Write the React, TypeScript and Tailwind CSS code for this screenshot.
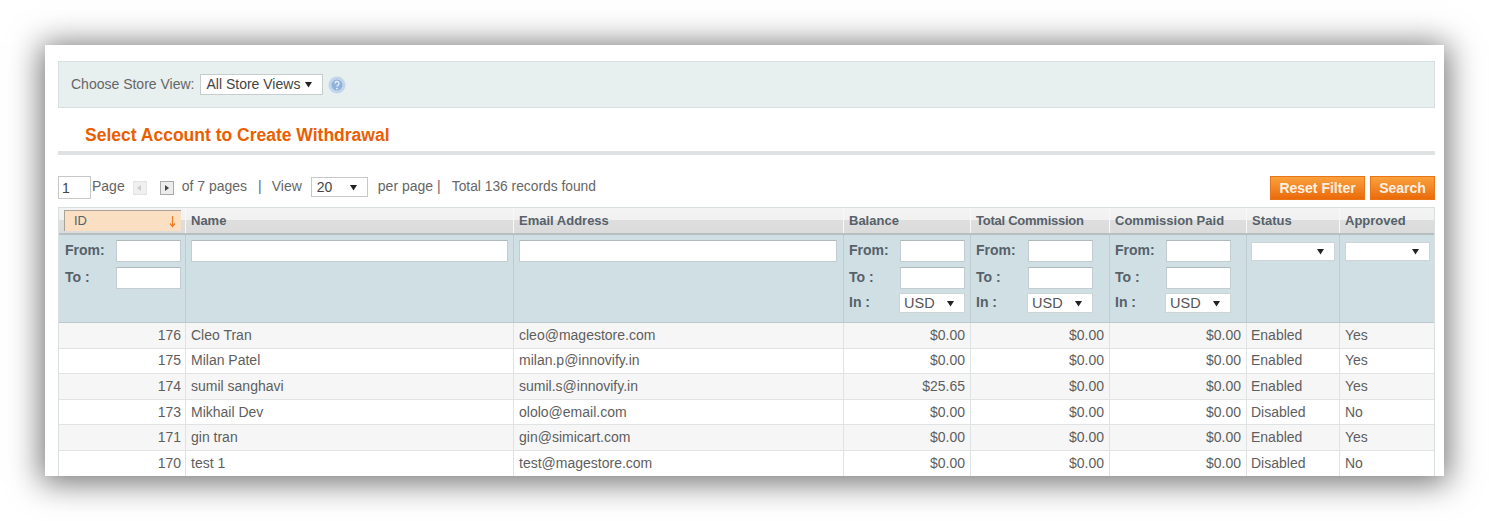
const font = "font-['Liberation_Sans',Arial,sans-serif]";

function Tri({ className = "" }: { className?: string }) {
  return (
    <svg width="7" height="7" viewBox="0 0 7 7" className={className}>
      <path d="M0 1h7L3.5 6.5z" fill="#222" />
    </svg>
  );
}

function Sel({ text, className }: { text?: string; className: string }) {
  return (
    <div className={`flex items-center justify-between bg-white border border-[#ccd4d6] text-[14.5px] text-[#555] ${className}`}>
      <span>{text}</span>
      <Tri />
    </div>
  );
}

function Inp({ className }: { className: string }) {
  return <div className={`bg-white border border-[#c3cdd0] border-t-[#aeb9bc] ${className}`} />;
}

function Range({ currency, pad = "pl-[5px]" }: { currency?: boolean; pad?: string }) {
  return (
    <div className={`flex flex-col pt-[5px] text-[14px] font-bold text-[#56616a] leading-none ${pad}`}>
      <div className="flex items-center justify-between h-[22px]">
        <span className="-mt-[2px]">From:</span>
        <Inp className="w-[65px] h-[22px]" />
      </div>
      <div className="flex items-center justify-between h-[22px] mt-[5px]">
        <span className="-mt-[3px]">To :</span>
        <Inp className="w-[65px] h-[22px]" />
      </div>
      {currency && (
        <div className="flex items-center justify-between h-[20px] mt-[4px]">
          <span className="-mt-[2px]">In :</span>
          <Sel text="USD" className="w-[66px] h-[20px] pl-[4px] pr-[10px] font-normal" />
        </div>
      )}
    </div>
  );
}

const cols = ["w-[126px]", "w-[328px]", "w-[330px]", "w-[127px]", "w-[139px]", "w-[137px]", "w-[93px]", "w-[95px]"];
const heads = ["ID", "Name", "Email Address", "Balance", "Total Commission", "Commission Paid", "Status", "Approved"];
const rows = [
  ["176", "Cleo Tran", "cleo@magestore.com", "$0.00", "Enabled", "Yes"],
  ["175", "Milan Patel", "milan.p@innovify.in", "$0.00", "Enabled", "Yes"],
  ["174", "sumil sanghavi", "sumil.s@innovify.in", "$25.65", "Enabled", "Yes"],
  ["173", "Mikhail Dev", "ololo@email.com", "$0.00", "Disabled", "No"],
  ["171", "gin tran", "gin@simicart.com", "$0.00", "Enabled", "Yes"],
  ["170", "test 1", "test@magestore.com", "$0.00", "Disabled", "No"],
];

export default function App() {
  return (
    <div className={`${font} w-[1489px] h-[521px] bg-white overflow-hidden pt-[45px] pl-[45px]`}>
      <div className="w-[1399px] h-[431px] bg-white shadow-[0_3px_30px_4px_rgba(0,0,0,0.55)] overflow-hidden pt-[16px] pl-[13px] pr-[9px]">
        {/* Store switcher */}
        <div className="h-[47px] bg-[#e7efef] border border-[#d6e0e0] flex items-center pl-[12px] text-[14px] text-[#666]">
          <span>Choose Store View:</span>
          <div className="ml-[6px] flex items-center w-[123px] h-[21px] bg-white border border-[#c5cdcd] pl-[5px] text-[#444]">
            <span>All Store Views</span>
            <Tri className="ml-[5px]" />
          </div>
          <svg width="18" height="18" viewBox="0 0 18 18" className="ml-[5px]">
            <circle cx="9" cy="9" r="8.5" fill="#c3d5ea" />
            <circle cx="9" cy="9" r="5.5" fill="#8fb2dc" />
            <path d="M7 7.5a2 2 0 1 1 3 1.7c-.7.4-1 .7-1 1.3" stroke="#eef3f9" strokeWidth="1.3" fill="none" />
            <circle cx="9" cy="12.6" r=".9" fill="#eef3f9" />
          </svg>
        </div>

        {/* Title */}
        <div className="h-[47px] border-b-[4px] border-[#dfe2e2] pl-[27px] pt-[16px] text-[17.5px] leading-[22px] font-bold text-[#eb5e00]">
          Select Account to Create Withdrawal
        </div>

        {/* Pager */}
        <div className="h-[52px] flex items-start justify-between pt-[21px] text-[14px] text-[#666]">
          <div className="flex items-center h-[23px]">
            <div className="w-[33px] h-[23px] bg-white border border-[#c8c8c8] pl-[3px] pt-[3px] text-[#444] leading-[16px]">1</div>
            <span className="ml-[1px] -mt-[3px]">Page</span>
            <span className="ml-[8px] w-[14px] h-[14px] bg-[#f0f0f0] border border-[#e2e2e2] flex items-center justify-center">
              <svg width="5" height="6" viewBox="0 0 5 6"><path d="M4 0v6L0 3z" fill="#ccc" /></svg>
            </span>
            <span className="ml-[13px] w-[14px] h-[14px] bg-[#ececec] border border-[#aaa] flex items-center justify-center">
              <svg width="5" height="6" viewBox="0 0 5 6"><path d="M1 0v6l4-3z" fill="#444" /></svg>
            </span>
            <span className="ml-[8px] -mt-[2px]">of 7 pages</span>
            <span className="ml-[11px] -mt-[2px]">|</span>
            <span className="ml-[10px] -mt-[2px]">View</span>
            <div className="ml-[9px] w-[57px] h-[20px] bg-white border border-[#c8c8c8] flex items-center justify-between pl-[5px] pr-[10px] text-[#444] -mt-[1px]">
              <span>20</span>
              <Tri />
            </div>
            <span className="ml-[10px] -mt-[2px]">per page</span>
            <span className="ml-[4px] -mt-[2px]">|</span>
            <span className="ml-[11px] -mt-[1px] text-[13.8px]">Total 136 records found</span>
          </div>
          <div className="flex items-center gap-[5px]">
            <div className="w-[95px] h-[24px] flex items-center justify-center bg-gradient-to-b from-[#f9a13b] to-[#ea6a06] border border-[#e8751a] text-[#fdf1e3] font-bold text-[14px]">Reset Filter</div>
            <div className="w-[65px] h-[24px] flex items-center justify-center bg-gradient-to-b from-[#f9a13b] to-[#ea6a06] border border-[#e8751a] text-[#fdf1e3] font-bold text-[14px]">Search</div>
          </div>
        </div>

        {/* Grid */}
        <div className="w-[1377px] border-l border-r border-[#dadfe0]">
          <div className="flex h-[28px] border-t border-b-[2px] border-t-[#dadfe0] border-b-[#b6bfc1] bg-[linear-gradient(#f3f3f3_0,#f1f1f1_50%,#dedede_50%,#dbdbdb_100%)]">
            {heads.map((h, i) => (
              <div key={h} className={`${cols[i]} shrink-0 relative flex items-center text-[13px] font-bold text-[#56616a] ${i ? "border-l border-[#f8f8f8] pl-[5px]" : "p-[2px] pl-[5px]"} ${h === "Total Commission" ? "tracking-[-0.25px]" : ""}`}>
                {i === 0 ? (
                  <div className="w-[117px] h-full bg-[#fadfc2] border-l border-t border-[#a8a297] flex items-center justify-between pl-[9px] pr-[5px] font-normal">
                    <span>ID</span>
                    <svg width="7" height="13" viewBox="0 0 7 13"><path d="M3.5 1v10M1 8.5l2.5 3 2.5-3" stroke="#ee7a22" strokeWidth="1.2" fill="none" /></svg>
                  </div>
                ) : h}
              </div>
            ))}
          </div>
          <div className="flex h-[88px] bg-[#d0dfe3] border-b border-[#bcc8cb]">
            <div className={`${cols[0]} shrink-0 pr-[4px]`}><Range pad="pl-[6px]" /></div>
            <div className={`${cols[1]} shrink-0 border-l border-[#bfcdd1] pt-[5px] pl-[5px] pr-[5px]`}><Inp className="h-[22px] w-full" /></div>
            <div className={`${cols[2]} shrink-0 border-l border-[#bfcdd1] pt-[5px] pl-[5px] pr-[5px]`}><Inp className="h-[22px] w-[318px]" /></div>
            <div className={`${cols[3]} shrink-0 border-l border-[#bfcdd1] pr-[5px]`}><Range currency /></div>
            <div className={`${cols[4]} shrink-0 border-l border-[#bfcdd1] pr-[16px]`}><Range currency /></div>
            <div className={`${cols[5]} shrink-0 border-l border-[#bfcdd1] pr-[15px]`}><Range currency /></div>
            <div className={`${cols[6]} shrink-0 border-l border-[#bfcdd1] pl-[4px] pr-[4px] pt-[7px]`}>
              <Sel className="h-[19px] pr-[10px]" />
            </div>
            <div className={`${cols[7]} shrink-0 border-l border-[#bfcdd1] pl-[5px] pr-[4px] pt-[7px]`}>
              <Sel className="h-[19px] pr-[10px]" />
            </div>
          </div>
          {rows.map((r, idx) => (
            <div key={r[0]} className={`flex h-[25.6px] border-b border-[#dfe3e4] text-[14px] text-[#5e5e5e] ${idx % 2 === 0 ? "bg-[#f6f6f6]" : "bg-white"}`}>
              <div className={`${cols[0]} shrink-0 flex items-center justify-end pr-[4px]`}>{r[0]}</div>
              <div className={`${cols[1]} shrink-0 flex items-center pl-[5px] border-l border-[#dfe3e4]`}>{r[1]}</div>
              <div className={`${cols[2]} shrink-0 flex items-center pl-[5px] border-l border-[#dfe3e4]`}>{r[2]}</div>
              <div className={`${cols[3]} shrink-0 flex items-center justify-end pr-[5px] border-l border-[#dfe3e4]`}>{r[3]}</div>
              <div className={`${cols[4]} shrink-0 flex items-center justify-end pr-[5px] border-l border-[#dfe3e4]`}>$0.00</div>
              <div className={`${cols[5]} shrink-0 flex items-center justify-end pr-[5px] border-l border-[#dfe3e4]`}>$0.00</div>
              <div className={`${cols[6]} shrink-0 flex items-center pl-[4px] border-l border-[#dfe3e4]`}>{r[4]}</div>
              <div className={`${cols[7]} shrink-0 flex items-center pl-[5px] border-l border-[#dfe3e4]`}>{r[5]}</div>
            </div>
          ))}
        </div>
      </div>
    </div>
  );
}
